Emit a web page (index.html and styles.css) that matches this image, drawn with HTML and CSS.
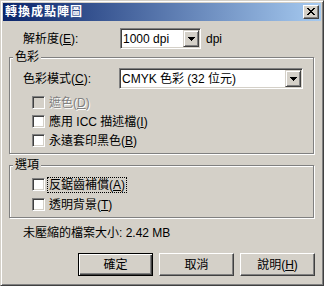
FILE: index.html
```html
<!DOCTYPE html>
<html lang="zh-Hant">
<head>
    <meta charset="UTF-8">
    <title>轉換成點陣圖</title>
    <link rel="stylesheet" href="styles.css">
</head>
<body>

<div class="window">
    <div class="titlebar">
        <span class="title">轉換成點陣圖</span>
        <span class="close">
            <svg width="8" height="7" viewBox="0 0 8 7" shape-rendering="crispEdges">
                <path d="M0 0h2v1H0z M6 0h2v1H6z M1 1h2v1H1z M5 1h2v1H5z M2 2h4v1H2z M3 3h2v1H3z M2 4h4v1H2z M1 5h2v1H1z M5 5h2v1H5z M0 6h2v1H0z M6 6h2v1H6z" fill="#000"/>
            </svg>
        </span>
    </div>

    <div class="content">
        <div class="row res-row">
            <span class="label res-label">解析度(<u>E</u>):</span>
            <div class="combo res-combo">
                <span class="combo-text">1000 dpi</span>
                <span class="drop"><svg width="7" height="4" viewBox="0 0 7 4" shape-rendering="crispEdges"><path d="M0 0h7v1H0z M1 1h5v1H1z M2 2h3v1H2z M3 3h1v1H3z" fill="#000"/></svg></span>
            </div>
            <span class="unit">dpi</span>
        </div>

        <fieldset class="group color-group">
            <legend>色彩</legend>
            <div class="row mode-row">
                <span class="label mode-label">色彩模式(<u>C</u>):</span>
                <div class="combo mode-combo">
                    <span class="combo-text">CMYK 色彩 (32 位元)</span>
                    <span class="drop"><svg width="7" height="4" viewBox="0 0 7 4" shape-rendering="crispEdges"><path d="M0 0h7v1H0z M1 1h5v1H1z M2 2h3v1H2z M3 3h1v1H3z" fill="#000"/></svg></span>
                </div>
            </div>
            <div class="check disabled first"><span class="box"></span><span class="check-text">遮色(<u>D</u>)</span></div>
            <div class="check"><span class="box"></span><span class="check-text">應用 ICC 描述檔(<u>I</u>)</span></div>
            <div class="check"><span class="box"></span><span class="check-text">永遠套印黑色(<u>B</u>)</span></div>
        </fieldset>

        <fieldset class="group options-group">
            <legend>選項</legend>
            <div class="check first"><span class="box"></span><span class="check-text focus">反鋸齒補償(<u>A</u>)</span></div>
            <div class="check second"><span class="box"></span><span class="check-text">透明背景(<u>T</u>)</span></div>
        </fieldset>

        <p class="size">未壓縮的檔案大小: 2.42 MB</p>

        <div class="buttons">
            <button class="btn default">確定</button>
            <button class="btn">取消</button>
            <button class="btn">說明(<u>H</u>)</button>
        </div>
    </div>
</div>

</body>
</html>
```

FILE: styles.css
```css
body {
    margin: 0;
    background-color: #d4d0c8;
    font-family: "Liberation Sans", "Noto Sans CJK TC", sans-serif;
    font-size: 12px;
    line-height: 14px;
    color: #000;
}
u {
    text-decoration: underline;
    text-underline-offset: 1px;
}
.window {
    width: 324px;
    height: 286px;
    box-sizing: border-box;
    border: 1px solid;
    border-color: #d4d0c8 #404040 #404040 #d4d0c8;
    box-shadow: inset 1px 1px #fff, inset -1px -1px #808080;
    padding: 2px;
    background-color: #d4d0c8;
}
.titlebar {
    height: 18px;
    display: flex;
    align-items: center;
    background: linear-gradient(to right, #0a246a, #a6caf0);
}
.title {
    padding-left: 2px;
    color: #fff;
    font-weight: bold;
    font-size: 12px;
    letter-spacing: 1px;
}
.close {
    margin-left: auto;
    margin-right: 2px;
    width: 16px;
    height: 14px;
    box-sizing: border-box;
    display: flex;
    align-items: center;
    justify-content: center;
    background-color: #d4d0c8;
    border: 1px solid;
    border-color: #fff #404040 #404040 #fff;
    box-shadow: inset -1px -1px #808080;
}
.close svg {
    display: block;
    margin-top: -1px;
}
.content {
    padding: 0 6px;
}
.row {
    display: flex;
    align-items: center;
}
.res-row {
    margin-top: 7px;
}
.label {
    flex: none;
}
.res-label {
    margin-left: 14px;
    width: 97px;
}
.mode-label {
    margin-left: 13px;
    width: 96px;
}
.combo {
    height: 21px;
    box-sizing: border-box;
    display: flex;
    align-items: center;
    background-color: #fff;
    border: 1px solid;
    border-color: #808080 #fff #fff #808080;
    box-shadow: inset 1px 1px #404040, inset -1px -1px #d4d0c8;
    padding: 1px;
}
.res-combo {
    width: 81px;
}
.mode-combo {
    width: 184px;
}
.combo-text {
    flex: 1;
    padding-left: 1px;
    white-space: nowrap;
}
.drop {
    width: 16px;
    height: 17px;
    box-sizing: border-box;
    display: flex;
    align-items: center;
    justify-content: center;
    background-color: #d4d0c8;
    border: 1px solid;
    border-color: #d4d0c8 #404040 #404040 #d4d0c8;
    box-shadow: inset 1px 1px #fff, inset -1px -1px #808080;
}
.drop svg {
    display: block;
}
.unit {
    margin-left: 5px;
}
.group {
    margin: 0 1px 0 0;
    padding: 0;
    min-width: 0;
    border: 1px solid #808080;
    box-shadow: inset 1px 1px #fff, 1px 1px #fff;
}
.group legend {
    margin-left: 3px;
    padding: 0 2px;
    line-height: 14px;
    background-color: #d4d0c8;
    position: relative;
}
.color-group {
    margin-top: 1px;
    padding-bottom: 6px;
}
.mode-row {
    margin-top: 4px;
}
.options-group {
    margin-top: 4px;
    padding-bottom: 6px;
}
.check {
    display: flex;
    align-items: center;
    height: 13px;
    margin-left: 22px;
    margin-top: 6px;
}
.color-group .check.first {
    margin-top: 7px;
}
.options-group .check.second {
    margin-top: 7px;
}
.box {
    flex: none;
    width: 13px;
    height: 13px;
    box-sizing: border-box;
    background-color: #fff;
    border: 1px solid;
    border-color: #808080 #fff #fff #808080;
    box-shadow: inset 1px 1px #404040, inset -1px -1px #d4d0c8;
}
.check-text {
    margin-left: 4px;
    white-space: nowrap;
}
.disabled .box {
    background-color: #d4d0c8;
}
.disabled .check-text {
    color: #808080;
    text-shadow: 1px 1px 0 #fff;
}
.focus {
    margin-left: 3px;
    padding: 0 1px;
    outline: 1px dotted #000;
}
.size {
    margin: 8px 0 0 14px;
}
.buttons {
    display: flex;
    justify-content: flex-end;
    gap: 6px;
    margin-top: 13px;
}
.btn {
    width: 75px;
    height: 23px;
    box-sizing: border-box;
    padding: 0;
    font: inherit;
    color: #000;
    background-color: #d4d0c8;
    border: 1px solid;
    border-color: #fff #404040 #404040 #fff;
    box-shadow: inset -1px -1px #808080;
}
.btn.default {
    border-color: #000;
    box-shadow: inset 1px 1px #fff, inset -1px -1px #404040, inset -2px -2px #808080;
}
```
